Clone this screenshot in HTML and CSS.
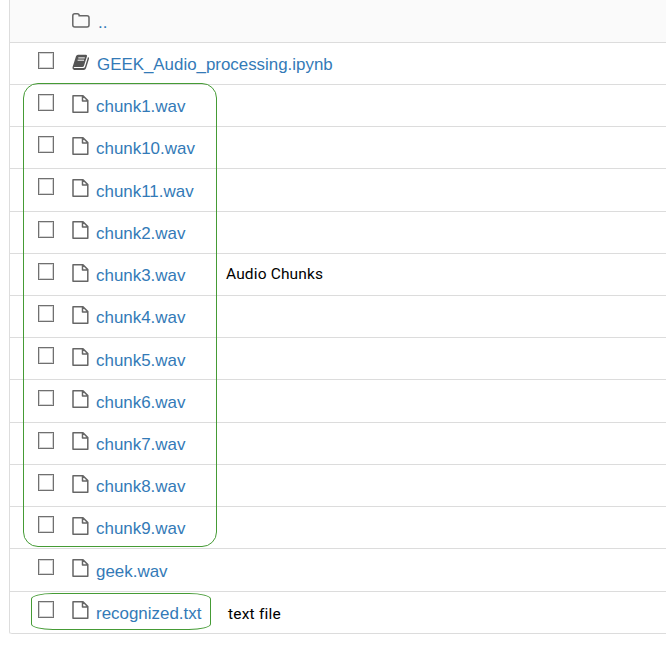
FILE: index.html
```html
<!DOCTYPE html>
<html lang="en">
<head>
<meta charset="utf-8">
<title>Files</title>
<link rel="stylesheet" href="styles.css">
</head>
<body>
<svg width="0" height="0" class="defs">
  <symbol id="file" viewBox="0 0 17 18"><path d="M1 .8H11L15.8 5.6V17.2H1ZM10.5 1V6H15.8" fill="none" stroke="#666" stroke-width="1.5" stroke-linejoin="round"/></symbol>
</svg>
<main class="list" id="list">
  <div class="row parent"><svg class="folder" viewBox="0 0 18 15"><path d="M.8 2.8Q.8.8 2.8.8H5.2Q7.2.8 7.2 2.8H15Q17 2.8 17 4.8V12Q17 14 15 14H2.8Q.8 14 .8 12Z" fill="none" stroke="#666" stroke-width="1.5"/></svg><a class="name">..</a></div>
  <div class="row notebook"><i class="check"></i><svg class="book" viewBox="0 0 18 17"><path d="M6 .8H14Q15.4 1 15 2.2L12 11.8Q11.6 13 10.2 13H2.6Q1.6 13.1 1.8 14H11.2Q12.6 14 13 12.7L16 3Q17.4 3.4 17 4.8L14 14.2Q13.4 16 11.8 16H2.2Q.1 15.5.5 13.2L4 2.3Q4.5.8 6 .8Z" fill="#555"/><path d="M6.3 3.9H12.8M5.6 6.2H12" fill="none" stroke="#fff" stroke-width="1"/></svg><a class="name">GEEK_Audio_processing.ipynb</a></div>
  <div class="row"><i class="check"></i><svg class="file"><use href="#file"/></svg><a class="name">chunk1.wav</a></div>
  <div class="row"><i class="check"></i><svg class="file"><use href="#file"/></svg><a class="name">chunk10.wav</a></div>
  <div class="row tall"><i class="check"></i><svg class="file"><use href="#file"/></svg><a class="name">chunk11.wav</a></div>
  <div class="row high-icon"><i class="check"></i><svg class="file"><use href="#file"/></svg><a class="name">chunk2.wav</a></div>
  <div class="row"><i class="check"></i><svg class="file"><use href="#file"/></svg><a class="name">chunk3.wav</a></div>
  <div class="row"><i class="check"></i><svg class="file"><use href="#file"/></svg><a class="name">chunk4.wav</a></div>
  <div class="row low-name"><i class="check"></i><svg class="file"><use href="#file"/></svg><a class="name">chunk5.wav</a></div>
  <div class="row tall short-check"><i class="check"></i><svg class="file"><use href="#file"/></svg><a class="name">chunk6.wav</a></div>
  <div class="row high-icon"><i class="check"></i><svg class="file"><use href="#file"/></svg><a class="name">chunk7.wav</a></div>
  <div class="row"><i class="check"></i><svg class="file"><use href="#file"/></svg><a class="name">chunk8.wav</a></div>
  <div class="row"><i class="check"></i><svg class="file"><use href="#file"/></svg><a class="name">chunk9.wav</a></div>
  <div class="row tall short-check"><i class="check"></i><svg class="file"><use href="#file"/></svg><a class="name">geek.wav</a></div>
  <div class="row high-icon"><i class="check"></i><svg class="file"><use href="#file"/></svg><a class="name">recognized.txt</a></div>
</main>
<div class="outline chunks"></div>
<div class="outline text"></div>
<span class="note note-chunks">Audio Chunks</span>
<span class="note note-text">text file</span>
</body>
</html>
```
FILE: styles.css
```css
body {
  margin: 0;
  position: relative;
  height: 656px;
  overflow: hidden;
  background: #fff;
  font-family: "Liberation Sans", Arial, sans-serif;
}
.defs { position: absolute; }
.list {
  margin-left: 9px;
  border-left: 1px solid #ddd;
  border-bottom-left-radius: 2px;
}
.row {
  box-sizing: border-box;
  height: 42px;
  padding-left: 28px;
  border-bottom: 1px solid #dcdcdc;
  display: flex;
  align-items: flex-start;
}
.row.tall { height: 43px; }
.row.parent {
  height: 43px;
  padding-left: 62px;
  background: #fafafa;
}
.row:last-child { border-bottom-left-radius: 2px; }
.check {
  box-sizing: border-box;
  width: 16px;
  height: 17px;
  margin: 9px 18px 0 0;
  border: 1px solid #707070;
  box-shadow: inset 0 0 0 1px #d4d4d4;
}
.short-check .check { height: 16px; margin-top: 10px; }
.file { width: 17px; height: 18px; margin-top: 10px; }
.high-icon .file { margin-top: 9px; }
.book { width: 18px; height: 17px; margin-top: 11px; }
.folder { width: 18px; height: 15px; margin-top: 13px; }
.name {
  align-self: flex-end;
  margin-left: 7px;
  padding-bottom: 9px;
  color: #337ab7;
  font-size: 16.95px;
  line-height: 20px;
  white-space: nowrap;
}
.low-name .name { padding-bottom: 8px; }
.notebook .name { margin-left: 7px; font-size: 16.9px; }
.parent .name { margin-left: 8px; padding-bottom: 9px; }
.outline {
  position: absolute;
  box-sizing: border-box;
  border: 1px solid #459b35;
}
.chunks {
  left: 23px;
  top: 83px;
  width: 194px;
  height: 464px;
  border-radius: 15px;
}
.text {
  left: 31px;
  top: 593px;
  width: 180px;
  height: 37px;
  border-radius: 22px / 6px;
}
.note {
  position: absolute;
  color: #000;
  font: 15.5px/20px Roboto, sans-serif;
  white-space: nowrap;
}
.note-chunks { left: 226px; top: 264px; letter-spacing: 0.15px; }
.note-text { left: 228px; top: 604px; letter-spacing: 0.2px; }
```
